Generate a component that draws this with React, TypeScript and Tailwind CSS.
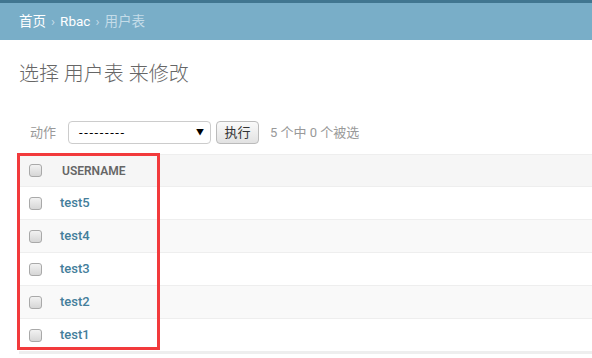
const font = {
  fontFamily: 'Roboto, "Noto Sans CJK SC", "Liberation Sans", sans-serif',
};

const users = ["test5", "test4", "test3", "test2", "test1"];

function Box() {
  return (
    <span className="block h-[13px] w-[13px] rounded-[3px] border border-[#a9a9a9] bg-gradient-to-b from-[#f2f2f2] to-[#d6d6d6]" />
  );
}

export default function App() {
  return (
    <div className="relative h-[358px] w-[592px] overflow-hidden bg-white" style={font}>
      <div className="h-[3px] bg-[#417690]" />
      <div className="flex h-[37px] items-center bg-[#79aec8] px-[19px] text-[13.5px] text-white">
        <span>首页</span>
        <span className="mx-[5px] text-[#c4dce8]">›</span>
        <span>Rbac</span>
        <span className="mx-[5px] text-[#c4dce8]">›</span>
        <span className="text-[#c4dce8]">用户表</span>
      </div>

      <h1 className="mt-[22px] px-[19px] text-[20px] font-light leading-[24px] text-[#666]">
        选择 用户表 来修改
      </h1>

      <div className="mt-[35px] flex items-center pl-[30px] text-[13px]">
        <span className="text-[#999]">动作</span>
        <div className="ml-[12px] flex h-[23px] w-[143px] items-center justify-between rounded-[4px] border border-[#ccc] bg-white pl-[10px] pr-[6px] text-black">
          <span className="text-[13px] tracking-[1.6px]">---------</span>
          <span className="text-[8px]">▼</span>
        </div>
        <div className="ml-[5px] flex h-[23px] w-[43px] items-center justify-center rounded-[4px] border border-[#bbb] bg-gradient-to-b from-[#fafafa] to-[#e2e2e2] text-[13px] text-[#333]">
          执行
        </div>
        <span className="ml-[11px] text-[#999]">5 个中 0 个被选</span>
      </div>

      <div className="ml-[19px] mt-[10px] border-b-2 border-[#eee]">
        <div className="flex h-[33px] items-center border-y border-[#eee] bg-[#f6f6f6]">
          <div className="w-[43px] pl-[10px]">
            <Box />
          </div>
          <span className="text-[12px] font-semibold uppercase text-[#666]">username</span>
        </div>
        {users.map((u, i) => (
          <div
            key={u}
            className={`flex h-[33px] items-center border-b border-[#eee] ${i % 2 ? "bg-[#f9f9f9]" : "bg-white"}`}
          >
            <div className="w-[41px] pl-[10px]">
              <Box />
            </div>
            <span className="text-[13px] font-medium text-[#447e9b]">{u}</span>
          </div>
        ))}
      </div>

      <div className="absolute left-[17px] top-[153px] h-[197px] w-[143px] border-[3px] border-[#f23a3c]" />
    </div>
  );
}
